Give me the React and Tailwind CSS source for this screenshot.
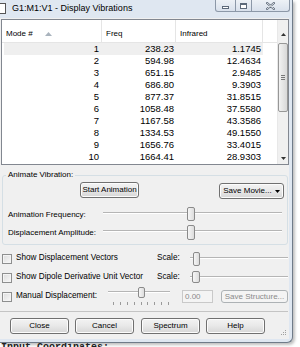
const rows = [
  ['1', '238.23', '1.1745'],
  ['2', '594.98', '12.4634'],
  ['3', '651.15', '2.9485'],
  ['4', '686.80', '9.3903'],
  ['5', '877.37', '31.8515'],
  ['6', '1058.48', '37.5580'],
  ['7', '1167.58', '43.3586'],
  ['8', '1334.53', '49.1550'],
  ['9', '1656.76', '33.4015'],
  ['10', '1664.41', '28.9303'],
];

function Btn({ children, className = '' }) {
  return (
    <div
      className={`flex items-center justify-center rounded-[3px] border border-[#707070] bg-linear-to-b from-[#f3f3f3] via-[#e8e8e8] to-[#d6d6d6] text-[8px] leading-none text-black shadow-[inset_0_0_0_1px_#fcfcfc] ${className}`}
    >
      {children}
    </div>
  );
}

function DisabledBtn({ children, className = '' }) {
  return (
    <div
      className={`flex items-center justify-center rounded-[3px] border border-[#adb2b5] bg-[#f4f4f4] text-[8px] leading-none text-[#8a8a8a] ${className}`}
    >
      {children}
    </div>
  );
}

function Checkbox({ className = '' }) {
  return (
    <div
      className={`h-[10px] w-[10px] shrink-0 border border-[#8e8f8f] bg-linear-to-br from-[#dcdcdc] to-[#f8f8f8] shadow-[inset_0_0_0_1px_#f4f4f4] ${className}`}
    />
  );
}

function Thumb({ className = '' }) {
  return (
    <div
      className={`absolute rounded-[2px] border border-[#8a8a8a] bg-linear-to-r from-[#f6f6f6] to-[#dcdcdc] ${className}`}
    />
  );
}

function Track({ className = '' }) {
  return <div className={`absolute h-[2px] border-t border-[#b5b5b5] border-b border-b-white ${className}`} />;
}

export default function App() {
  return (
    <div className="relative h-[347px] w-[300px] overflow-hidden bg-white font-['Liberation_Sans',Arial,sans-serif] text-black">
      {/* window */}
      <div className="flex h-[343px] w-[293px] flex-col rounded-br-[6px] border-r border-b border-[#6f7b89] bg-[#dfe7f1] shadow-[2px_2px_3px_rgba(0,0,0,0.25)]">
        {/* title bar */}
        <div className="flex h-[18px] shrink-0 items-start">
          <div className="mt-[3px] h-[11px] w-[6px] border-r border-b border-t border-[#555] bg-white" />
          <div className="ml-[6px] mt-[2px] text-[9px] leading-[12px] text-black">G1:M1:V1 - Display Vibrations</div>
          <div className="ml-auto mr-[2px] flex h-[12px]">
            <div className="flex h-[12px] w-[21px] items-end justify-center rounded-bl-[3px] border border-t-0 border-[#8c98a8] bg-linear-to-b from-[#edf1f6] to-[#d9e1ec] pb-[2px]">
              <div className="h-[3px] w-[7px] border border-[#5d6a7a] bg-white" />
            </div>
            <div className="flex h-[12px] w-[16px] items-center justify-center border-b border-r border-[#8c98a8] bg-linear-to-b from-[#edf1f6] to-[#d9e1ec]">
              <div className="h-[6px] w-[7px] border border-[#5d6a7a] border-t-2 bg-white" />
            </div>
            <div className="flex h-[12px] w-[38px] items-center justify-center rounded-br-[3px] border-b border-r border-[#8c98a8] bg-linear-to-b from-[#edf1f6] to-[#d9e1ec]">
              <svg width="9" height="8" viewBox="0 0 9 8">
                <path d="M1 1 L8 7 M8 1 L1 7" stroke="#5d6a7a" strokeWidth="2.2" strokeLinecap="round" />
                <path d="M1 1 L8 7 M8 1 L1 7" stroke="#ffffff" strokeWidth="0.8" strokeLinecap="round" />
              </svg>
            </div>
          </div>
        </div>

        {/* client area */}
        <div className="relative mr-[3px] mb-[3px] flex flex-1 flex-col bg-[#f0f0f0] pt-[1px]">
          {/* list view */}
          <div className="ml-[1px] flex h-[146px] w-[288px] border border-[#828790] bg-white">
            <div className="flex w-[275px] flex-col">
              {/* header */}
              <div className="flex h-[23px] shrink-0 items-stretch border-b border-[#e5e5e5] text-[8px] text-black">
                <div className="flex w-[100px] items-center border-r border-[#e5e5e5] pl-[4px] pt-[5px]">
                  <span>Mode #</span>
                  <svg className="ml-[12px]" width="7" height="4" viewBox="0 0 7 4">
                    <path d="M0 4 L3.5 0 L7 4 Z" fill="#a9b3bd" />
                  </svg>
                </div>
                <div className="flex w-[74px] items-center border-r border-[#e5e5e5] pl-[4px] pt-[5px]">Freq</div>
                <div className="flex w-[87px] items-center border-r border-[#e5e5e5] pl-[4px] pt-[5px]">Infrared</div>
                <div className="flex-1" />
              </div>
              {/* rows */}
              {rows.map((r, i) => (
                <div key={r[0]} className="flex h-[12px] text-[9.5px] leading-[12px]">
                  <div className={`ml-[2px] flex w-[259px] ${i === 0 ? 'bg-[#efefef]' : ''}`}>
                    <div className="w-[95px] text-right">{r[0]}</div>
                    <div className="w-[75px] text-right">{r[1]}</div>
                    <div className="w-[87px] text-right">{r[2]}</div>
                  </div>
                </div>
              ))}
            </div>
            {/* scrollbar */}
            <div className="flex w-[11px] flex-col border-l border-[#e8e8e8] bg-[#f0f0f0]">
              <div className="flex h-[23px] items-center justify-center pt-[5px]">
                <svg width="5" height="3" viewBox="0 0 5 3">
                  <path d="M0 3 L2.5 0 L5 3 Z" fill="#333" />
                </svg>
              </div>
              <div className="flex h-[69px] flex-col items-center justify-center gap-[1px] rounded-[2px] border border-[#979797] bg-linear-to-r from-[#f2f2f2] to-[#d8d8d8]">
                <div className="h-px w-[4px] bg-[#777]" />
                <div className="h-px w-[4px] bg-[#777]" />
                <div className="h-px w-[4px] bg-[#777]" />
              </div>
              <div className="flex-1" />
              <div className="flex h-[12px] items-center justify-center">
                <svg width="5" height="3" viewBox="0 0 5 3">
                  <path d="M0 0 L2.5 3 L5 0 Z" fill="#333" />
                </svg>
              </div>
            </div>
          </div>

          {/* group box */}
          <div className="relative ml-[2px] mt-[10px] h-[70px] w-[286px] rounded-[3px] border border-[#d5dfe5]">
            <div className="absolute left-[3px] top-[-6px] bg-[#f0f0f0] px-[2px] text-[8px] leading-[10px]">Animate Vibration:</div>
            <div className="flex flex-col">
              <div className="mt-[6px] flex h-[16px] items-start">
                <Btn className="ml-[77px] h-[16px] w-[59px]">Start Animation</Btn>
                <Btn className="ml-auto mr-[3px] mt-[1px] h-[16px] w-[65px]">
                  <span>Save Movie...</span>
                  <svg className="ml-[3px]" width="5" height="3" viewBox="0 0 5 3">
                    <path d="M0 0 L2.5 3 L5 0 Z" fill="#000" />
                  </svg>
                </Btn>
              </div>
              <div className="mt-[9px] flex h-[15px] items-center">
                <span className="ml-[5px] w-[95px] text-[8px] leading-none">Animation Frequency:</span>
                <div className="relative h-[15px] w-[179px]">
                  <Track className="left-0 right-0 top-[5px]" />
                  <Thumb className="left-[84px] top-0 h-[14px] w-[8px]" />
                </div>
              </div>
              <div className="mt-[3px] flex h-[15px] items-center">
                <span className="ml-[5px] w-[95px] text-[8px] leading-none">Displacement Amplitude:</span>
                <div className="relative h-[15px] w-[179px]">
                  <Track className="left-0 right-0 top-[5px]" />
                  <Thumb className="left-[84px] top-0 h-[15px] w-[8px]" />
                </div>
              </div>
            </div>
          </div>

          {/* check rows */}
          <div className="mt-[6px] flex h-[15px] items-center text-[8.2px] leading-none">
            <Checkbox className="ml-[2px]" />
            <span className="ml-[4px] w-[141px]">Show Displacement Vectors</span>
            <span className="w-[33px]">Scale:</span>
            <div className="relative h-[15px] w-[98px]">
              <Track className="left-0 right-0 top-[6px]" />
              <Thumb className="left-[3px] top-[1px] h-[14px] w-[7px]" />
            </div>
          </div>
          <div className="mt-[4px] flex h-[15px] items-center text-[8.2px] leading-none">
            <Checkbox className="ml-[2px]" />
            <span className="ml-[4px] w-[141px]">Show Dipole Derivative Unit Vector</span>
            <span className="w-[33px]">Scale:</span>
            <div className="relative h-[15px] w-[98px]">
              <Track className="left-0 right-0 top-[6px]" />
              <Thumb className="left-[2px] top-[1px] h-[12px] w-[8px]" />
            </div>
          </div>
          <div className="mt-[4px] flex h-[15px] items-center text-[8.2px] leading-none">
            <Checkbox className="ml-[2px]" />
            <span className="ml-[4px] w-[92px]">Manual Displacement:</span>
            <div className="relative mb-[6px] h-[13px] w-[62px]">
              <Track className="left-0 right-0 top-[4px]" />
              <Thumb className="left-[30px] top-0 h-[11px] w-[7px]" />
              <div className="absolute left-[5px] top-[15px] flex w-[56px] justify-between">
                {Array.from({ length: 9 }).map((_, i) => (
                  <div key={i} className="h-[3px] w-px bg-[#9a9a9a]" />
                ))}
              </div>
            </div>
            <div className="ml-[12px] flex h-[13px] w-[31px] items-center border border-[#c9c9c9] bg-[#f4f4f4] pl-[2px] text-[8px] text-[#8a8a8a]">0.00</div>
            <DisabledBtn className="ml-[8px] h-[13px] w-[67px]">Save Structure...</DisabledBtn>
          </div>

          {/* separator */}
          <div className="mt-[7px] h-px w-[288px] bg-[#c4c4c4]" />

          {/* bottom buttons */}
          <div className="mt-[6px] flex h-[16px]">
            <Btn className="ml-[10px] h-[16px] w-[59px]">Close</Btn>
            <Btn className="ml-[6px] h-[16px] w-[59px]">Cancel</Btn>
            <Btn className="ml-[7px] h-[16px] w-[59px]">Spectrum</Btn>
            <Btn className="ml-[6px] h-[16px] w-[59px]">Help</Btn>
          </div>

          {/* size grip */}
          <svg className="absolute bottom-[3px] right-[2px]" width="7" height="7" viewBox="0 0 7 7">
            <rect x="5" y="1" width="1" height="1" fill="#a0a0a0" />
            <rect x="3" y="3" width="1" height="1" fill="#a0a0a0" />
            <rect x="5" y="3" width="1" height="1" fill="#a0a0a0" />
            <rect x="1" y="5" width="1" height="1" fill="#a0a0a0" />
            <rect x="3" y="5" width="1" height="1" fill="#a0a0a0" />
            <rect x="5" y="5" width="1" height="1" fill="#a0a0a0" />
          </svg>
        </div>
      </div>
      {/* background text peeking below window */}
      <div className="h-[4px] overflow-hidden">
        <div className="pl-[1px] font-['Liberation_Mono',monospace] text-[10px] font-bold leading-[10px] text-[#222]">Input Coordinates:</div>
      </div>
    </div>
  );
}
